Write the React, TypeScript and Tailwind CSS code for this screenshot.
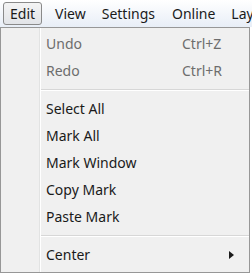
import React from "react";

const font = { fontFamily: '"Noto Sans", "Open Sans", sans-serif' };

function Item({ label, shortcut, disabled, arrow }: { label: string; shortcut?: string; disabled?: boolean; arrow?: boolean }) {
  return (
    <div className={`flex h-[27px] items-center ${disabled ? "text-[#6d6d6d]" : "text-[#1a1a1a]"}`}>
      <div className="w-[45px] shrink-0" />
      <div className="w-[136px] shrink-0">{label}</div>
      <div className="flex-1">{shortcut}</div>
      {arrow && (
        <svg width="5" height="8" viewBox="0 0 5 8" className="mr-[15px]">
          <polygon points="0,0 5,4 0,8" fill="#1a1a1a" />
        </svg>
      )}
    </div>
  );
}

function Sep() {
  return (
    <div className="flex h-[11px] flex-col justify-center pl-[40px]">
      <div className="h-px bg-[#d7d7d7]" />
      <div className="h-px bg-white" />
    </div>
  );
}

export default function App() {
  return (
    <div className="h-[274px] w-[252px] overflow-hidden bg-white text-[14px] leading-none" style={font}>
      <div className="flex h-[27px] w-[252px] items-center overflow-hidden bg-gradient-to-b from-[#ffffff] to-[#e8eef7] text-[#1a1a1a]">
        <div className="ml-[3px] flex h-[23px] shrink-0 items-center rounded-[3px] border border-[#8a8a8a] bg-gradient-to-b from-[#f4f4f4] to-[#e2e4e8] px-[6px]">
          Edit
        </div>
        <div className="ml-[13px] shrink-0">View</div>
        <div className="ml-[16px] shrink-0">Settings</div>
        <div className="ml-[17px] shrink-0">Online</div>
        <div className="ml-[16px] shrink-0 whitespace-nowrap">Layout</div>
      </div>
      <div className="relative h-[246px] w-[250px] border border-[#979797] bg-[#f0f0f0] pt-[2px]">
        <div className="absolute bottom-0 left-[38px] top-0 w-px bg-[#e2e3e3]" />
        <div className="absolute bottom-0 left-[39px] top-0 w-px bg-white" />
        <div className="relative">
          <Item label="Undo" shortcut="Ctrl+Z" disabled />
          <Item label="Redo" shortcut="Ctrl+R" disabled />
          <Sep />
          <Item label="Select All" />
          <Item label="Mark All" />
          <Item label="Mark Window" />
          <Item label="Copy Mark" />
          <Item label="Paste Mark" />
          <Sep />
          <Item label="Center" arrow />
        </div>
      </div>
    </div>
  );
}
